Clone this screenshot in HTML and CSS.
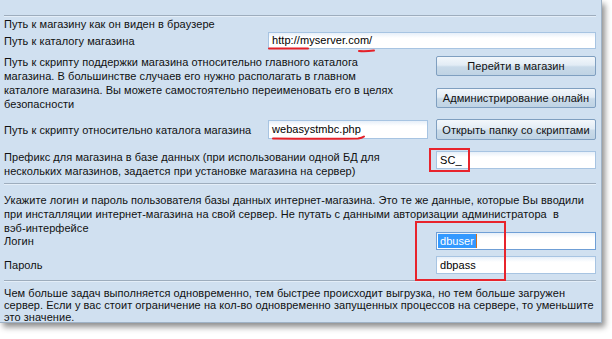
FILE: index.html
```html
<!DOCTYPE html>
<html lang="ru">
<head>
<meta charset="utf-8">
<link rel="stylesheet" href="styles.css">
</head>
<body>
<div class="panel">
  <div class="sep top"></div>
  <div class="line l1">Путь к магазину как он виден в браузере</div>
  <div class="row r-url">
    <span class="label">Путь к каталогу магазина</span>
    <div class="field f-url">http://myserver.com/</div>
  </div>
  <div class="row r-support">
    <p class="para">Путь к скрипту поддержки магазина относительно главного каталога<br>магазина. В большинстве случаев его нужно располагать в главном<br>каталоге магазина. Вы можете самостоятельно переименовать его в целях<br>безопасности</p>
    <div class="btns">
      <button class="btn">Перейти в магазин</button>
      <button class="btn">Администрирование онлайн</button>
    </div>
  </div>
  <div class="row r-script">
    <span class="label l-script">Путь к скрипту относительно каталога магазина</span>
    <div class="field f-mid">webasystmbc.php</div>
    <button class="btn b-open">Открыть папку со скриптами</button>
  </div>
  <div class="row r-prefix">
    <p class="para">Префикс для магазина в базе данных (при использовании одной БД для<br>нескольких магазинов, задается при установке магазина на сервер)</p>
    <div class="field f-small f-prefix">SC_</div>
  </div>
  <div class="sep mid"></div>
  <p class="para p-login">Укажите логин и пароль пользователя базы данных интернет-магазина. Это те же данные, которые Вы вводили<br>при инсталляции интернет-магазина на свой сервер. Не путать с данными авторизации администратора&nbsp; в<br>вэб-интерфейсе</p>
  <div class="row r-cred">
    <span class="label">Логин</span>
    <div class="field f-small focus"><span class="sel">dbuser</span><span class="caret"></span></div>
  </div>
  <div class="row r-cred r-pass">
    <span class="label">Пароль</span>
    <div class="field f-small">dbpass</div>
  </div>
  <div class="sep bot"></div>
  <p class="para p-last">Чем больше задач выполняется одновременно, тем быстрее происходит выгрузка, но тем больше загружен<br>сервер. Если у вас стоит ограничение на кол-во одновременно запущенных процессов на сервере, то уменьшите<br>это значение.</p>

  <svg class="marks" width="612" height="339" viewBox="0 0 612 339">
    <path d="M269 48.5 L308 48.5" />
    <path d="M359 51 Q366 51.5 374 50.5" />
    <path d="M273 138.5 Q320 139 358 138.5 Q362 138 364 136.5" />
  </svg>
  <div class="box box-prefix"></div>
  <div class="box box-cred"></div>
</div>
</body>
</html>
```

FILE: styles.css
```css
html, body {
  margin: 0;
  padding: 0;
  background: #ffffff;
}
body {
  width: 612px;
  height: 339px;
  overflow: hidden;
  font-family: "Liberation Sans", Arial, sans-serif;
  font-size: 11px;
  letter-spacing: 0.06px;
  color: #111111;
}
.panel {
  position: relative;
  box-sizing: border-box;
  width: 602px;
  height: 323px;
  padding: 15px 5px 0 4px;
  background: #d0e0f0;
  border-right: 1px solid #9fb2c6;
  border-bottom: 1px solid #9fb2c6;
  box-shadow: 3px 4px 6px rgba(0, 0, 0, 0.45);
}
.sep {
  height: 1px;
  background: #9eadbd;
  border-bottom: 1px solid #e4eef8;
}
.line {
  line-height: 14px;
  height: 14px;
  margin-top: 0;
}
.row {
  display: flex;
  align-items: center;
}
.label {
  flex: 1;
  line-height: 14px;
  white-space: nowrap;
}
.para {
  margin: 0;
  line-height: 14px;
  white-space: nowrap;
}
.field {
  box-sizing: border-box;
  height: 17px;
  line-height: 15px;
  padding-left: 3px;
  border: 1px solid #a7c4e2;
  background: linear-gradient(#e6eff9 0, #ffffff 5px, #ffffff 100%);
  white-space: nowrap;
  color: #000;
}
.r-url {
  margin-top: 1px;
}
.f-url {
  width: 328px;
}
.r-support {
  margin-top: 6px;
  align-items: flex-start;
  justify-content: space-between;
}
.btns {
  display: flex;
  flex-direction: column;
  gap: 12px;
  margin-top: 1px;
}
.btn {
  box-sizing: border-box;
  width: 160px;
  height: 20px;
  padding: 0;
  font-family: "Liberation Sans", Arial, sans-serif;
  font-size: 11px;
  letter-spacing: 0.06px;
  color: #111;
  border: 1px solid #7f9fc0;
  border-radius: 2px;
  background: linear-gradient(#f3f7fb 0%, #e2ecf5 45%, #c9dae9 55%, #bfd3e4 100%);
}
.r-script {
  margin-top: 8px;
}
.l-script {
  flex: none;
  width: 264px;
}
.f-mid {
  width: 160px;
  height: 19px;
  line-height: 17px;
}
.b-open {
  margin-left: 8px;
  height: 21px;
}
.r-prefix {
  margin-top: 10px;
  align-items: flex-start;
  justify-content: space-between;
}
.f-small {
  width: 160px;
  height: 18px;
  line-height: 16px;
}
.f-prefix {
  margin-top: 1px;
}
.sep.mid {
  margin-top: 5px;
}
.p-login {
  margin-top: 8px;
}
.r-cred {
  margin-top: -3px;
}
.r-cred.r-pass {
  margin-top: 6px;
}
.focus {
  border-color: #6f9fd6;
  padding-left: 1px;
  display: flex;
  align-items: center;
}
.sel {
  background: #3399ff;
  color: #ffffff;
  padding: 0 2px;
  line-height: 14px;
}
.caret {
  display: inline-block;
  width: 1px;
  height: 14px;
  background: #d07020;
}
.sep.bot {
  margin-top: 6px;
}
.p-last {
  margin-top: 5px;
  line-height: 12px;
}
.marks {
  position: absolute;
  left: 0;
  top: 0;
  pointer-events: none;
}
.marks path {
  fill: none;
  stroke: #e52129;
  stroke-width: 2;
  stroke-linecap: round;
}
.box {
  position: absolute;
  box-sizing: border-box;
  border: 2px solid #e8242c;
}
.box-prefix {
  left: 429px;
  top: 148px;
  width: 41px;
  height: 24px;
}
.box-cred {
  left: 415px;
  top: 221px;
  width: 91px;
  height: 60px;
}
```
